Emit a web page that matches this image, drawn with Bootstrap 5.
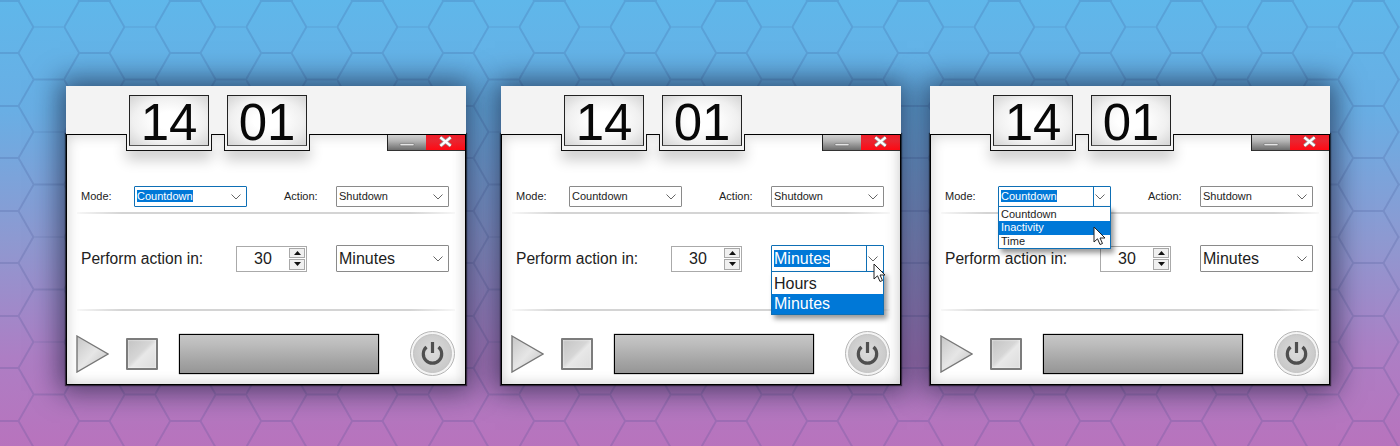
<!doctype html>
<html lang="en">
<head>
<meta charset="utf-8">
<title>Shutdown timer</title>
<link rel="stylesheet" href="https://cdn.jsdelivr.net/npm/bootstrap@5.3.0/dist/css/bootstrap.min.css">
<style>
html,body{height:446px;overflow:hidden}
body{margin:0;padding:86px 0 0 66px;font-family:"Liberation Sans",Arial,sans-serif;color:#1c1c1c;
 background-color:#8f98d0;
 background-image:url("data:image/svg+xml,%3Csvg xmlns='http://www.w3.org/2000/svg' width='91' height='52.5'%3E%3Cpath d='M0 26.25L15.17 0H45.5L60.67 26.25L45.5 52.5H15.17ZM60.67 26.25H91' fill='none' stroke='%23304080' stroke-opacity='.17' stroke-width='2'/%3E%3C/svg%3E"),linear-gradient(180deg,#5fb7ea 0%,#69aee4 25%,#8f98d0 55%,#ad7ec4 80%,#b873bd 100%);
 background-position:64px .75px,0 0;background-repeat:repeat,no-repeat}
.desk{gap:35px}
.desk>.win:last-child{margin-left:-6px}
.win{width:400px;height:299px;position:relative;box-shadow:0 0 26px 6px rgba(10,15,40,.6)}
.band{height:48px;background:#f3f3f3;padding:9px 0 0 60px;gap:12px;position:relative;z-index:2}
.tab{width:86px;height:56px;position:relative;padding:0 3px;flex:none}
.tab::after{content:"";position:absolute;left:0;right:0;top:39px;height:17px;border:1.500px solid #111;border-top:0;background:#f3f3f3;box-shadow:0 9px 14px rgba(0,0,0,.2);z-index:-1}
.digits{height:51px;border:1px solid #222;border-bottom:1px solid #555;font-size:51px;line-height:54px;text-align:center;color:#080808;
 background:radial-gradient(ellipse at center,#fff 25%,#f0f0f0 65%,#d4d4d4 100%)}
.pane{height:251px;background:#fff;border:solid #000;border-width:1px 1px 1px 1px;box-shadow:inset 0 0 14px rgba(0,0,0,.2),0 0 1px 1px rgba(0,0,0,.55)}
.chrome{height:16px}
.chrome svg{display:block}
.mini,.shut{width:39px;height:16px;border-bottom:1px solid #333;border-left:1px solid #222}
.mini{background:linear-gradient(180deg,#d0d0d0,#b4b4b4 40%,#6d6d6d)}
.shut{width:39px;background:linear-gradient(180deg,#f01c28,#e92530 40%,#ff0a14);border-left:0}
.lbl-s{font-size:11px;width:53px;color:#222}
.combo{position:relative;width:113px;background:#fff;border:1px solid #8a8a8a;border-radius:1px;flex:none}
.combo-s{height:21px;font-size:11px;line-height:19px;padding-left:2px}
.combo-l{height:27px;font-size:16px;line-height:25px;padding-left:2px}
.combo svg.chev{position:absolute;right:5px;top:50%;margin-top:-3px}
.hot{border-color:#0e6fb5}
.hot>span.txt{background:#0078d7;color:#fff}
.split::after{content:"";position:absolute;right:16px;top:0;bottom:0;width:1px;background:#0e6fb5}
.rule{height:2px;margin:5px 10px 0 10px;background:linear-gradient(90deg,#f7f7f7,#d4d4d4 12%,#d4d4d4 88%,#f7f7f7)}
.row-mode{margin:35px 0 0 14px}
.row-act{font-size:11px;width:52px;margin-left:37px;color:#222}
.row-perf{margin:31px 0 0 14px}
.lbl-l{width:155px;font-size:15.6px;color:#222}
.spin{width:71px;height:26px;border:1px solid #aaa;background:#fff;font-size:16px;line-height:24px;padding-left:17px;margin-right:29px;position:relative;flex:none}
.arrows{position:absolute;right:1px;top:1px;width:16px}
.arrows i{display:flex;align-items:center;justify-content:center;height:10.5px;background:#f0f0f0;border:1px solid #a8a8a8;margin-bottom:1px}
.rule2{margin-top:37px}
.foot{margin:20px 0 0 9px}
.stopper{width:32px;height:32px;border:2px solid #7c7c7c;border-radius:1px;margin:0 21px 0 17px;flex:none;background:linear-gradient(135deg,#c4c4c4,#d6d6d6 45%,#e8e8e8 55%,#dcdcdc);box-shadow:inset 0 0 2px #fff}
.meter{width:200px;height:40px;border:1px solid #000;box-shadow:0 0 1px rgba(0,0,0,.8);background:linear-gradient(180deg,#c6c6c6,#bcbcbc 25%,#a4a4a4 70%,#969696);flex:none}
.powr{margin-left:31px;flex:none}
.drop{position:absolute;left:-1px;top:100%;width:113px;background:#fff;border:1px solid #0e6fb5;z-index:5;box-shadow:3px 4px 5px rgba(0,0,0,.4)}
.drop-s{font-size:11px;line-height:13.3px;padding-top:1px}
.drop-l{font-size:16px;line-height:20px;padding-top:2px}
.drop div{padding-left:2px}
.drop .on{background:#0078d7;color:#fff}
.ptr{position:absolute;z-index:6}
</style>
</head>
<body>
<svg width="0" height="0" aria-hidden="true" style="position:absolute">
 <defs>
  <linearGradient id="pg" x1="0" y1="0" x2="1" y2="1"><stop offset="0" stop-color="#c6c6c6"/><stop offset=".5" stop-color="#e6e6e6"/><stop offset="1" stop-color="#bdbdbd"/></linearGradient>
  <radialGradient id="ball" cx=".5" cy=".45" r=".55"><stop offset="0" stop-color="#dcdcdc"/><stop offset="1" stop-color="#c8c8c8"/></radialGradient>
  <symbol id="chev" viewBox="0 0 10 6"><path d="M.5 .5L5 5L9.500 .5" fill="none" stroke="#666" stroke-width="1"/></symbol>
  <symbol id="play" viewBox="0 0 33 38"><path d="M1 1L32 19L1 37Z" fill="url(#pg)" stroke="#777" stroke-width="1.4"/></symbol>
  <symbol id="power" viewBox="0 0 45 45"><circle cx="22.500" cy="22.500" r="22" fill="#f4f4f4" stroke="#b4b4b4"/><circle cx="22.500" cy="22.500" r="19" fill="url(#ball)" stroke="#c4c4c4"/><path d="M16.500 16A9.200 9.200 0 1 0 28.500 16" fill="none" stroke="#4f4f4f" stroke-width="3.200"/><path d="M22.500 11V22" stroke="#4f4f4f" stroke-width="3.200"/></symbol>
  <symbol id="close" viewBox="0 0 39 16"><path d="M14 2.500L25 11.500M25 2.500L14 11.500" stroke="#999" stroke-width="4"/><path d="M14 2.500L25 11.500M25 2.500L14 11.500" stroke="#fff" stroke-width="2.400"/></symbol>
  <symbol id="dash" viewBox="0 0 39 16"><rect x="12" y="9" width="15" height="2.500" rx="1" fill="#e4e4e4" stroke="#666" stroke-width=".6"/></symbol>
  <symbol id="arrow" viewBox="0 0 14 20"><path d="M1 1V16L4.500 12.800L7 18.500L9.500 17.500L7 12H12Z" fill="#fff" stroke="#222" stroke-width="1"/></symbol>
  <symbol id="up" viewBox="0 0 7 4"><path d="M3.500 0L7 4H0Z" fill="#111"/></symbol>
  <symbol id="down" viewBox="0 0 7 4"><path d="M0 0H7L3.500 4Z" fill="#111"/></symbol>
 </defs>
</svg>

<main class="desk d-flex">
 <!-- window 1 -->
 <section class="win d-flex flex-column">
  <div class="band d-flex">
   <div class="tab"><div class="digits">14</div></div>
   <div class="tab"><div class="digits">01</div></div>
  </div>
  <div class="pane">
   <div class="chrome d-flex justify-content-end">
    <div class="mini"><svg width="38" height="15"><use href="#dash"/></svg></div>
    <div class="shut"><svg width="39" height="15"><use href="#close"/></svg></div>
   </div>
   <div class="row-mode d-flex align-items-center">
    <div class="lbl-s">Mode:</div>
    <div class="combo combo-s hot"><span class="txt">Countdown</span><svg class="chev" width="10" height="6"><use href="#chev"/></svg></div>
    <div class="row-act">Action:</div>
    <div class="combo combo-s">Shutdown<svg class="chev" width="10" height="6"><use href="#chev"/></svg></div>
   </div>
   <div class="rule"></div>
   <div class="row-perf d-flex align-items-center">
    <div class="lbl-l">Perform action in:</div>
    <div class="spin">30<div class="arrows"><i><svg width="7" height="4"><use href="#up"/></svg></i><i><svg width="7" height="4"><use href="#down"/></svg></i></div></div>
    <div class="combo combo-l">Minutes<svg class="chev" width="10" height="6"><use href="#chev"/></svg></div>
   </div>
   <div class="rule rule2"></div>
   <div class="foot d-flex align-items-center">
    <svg width="33" height="38"><use href="#play"/></svg>
    <div class="stopper"></div>
    <div class="meter"></div>
    <svg class="powr" width="45" height="45"><use href="#power"/></svg>
   </div>
  </div>
 </section>

 <!-- window 2 -->
 <section class="win d-flex flex-column">
  <div class="band d-flex">
   <div class="tab"><div class="digits">14</div></div>
   <div class="tab"><div class="digits">01</div></div>
  </div>
  <div class="pane">
   <div class="chrome d-flex justify-content-end">
    <div class="mini"><svg width="38" height="15"><use href="#dash"/></svg></div>
    <div class="shut"><svg width="39" height="15"><use href="#close"/></svg></div>
   </div>
   <div class="row-mode d-flex align-items-center">
    <div class="lbl-s">Mode:</div>
    <div class="combo combo-s">Countdown<svg class="chev" width="10" height="6"><use href="#chev"/></svg></div>
    <div class="row-act">Action:</div>
    <div class="combo combo-s">Shutdown<svg class="chev" width="10" height="6"><use href="#chev"/></svg></div>
   </div>
   <div class="rule"></div>
   <div class="row-perf d-flex align-items-center">
    <div class="lbl-l">Perform action in:</div>
    <div class="spin">30<div class="arrows"><i><svg width="7" height="4"><use href="#up"/></svg></i><i><svg width="7" height="4"><use href="#down"/></svg></i></div></div>
    <div class="combo combo-l hot split"><span class="txt">Minutes</span><svg class="chev" width="10" height="6"><use href="#chev"/></svg>
     <div class="drop drop-l"><div>Hours</div><div class="on">Minutes</div></div>
     <svg class="ptr" style="left:101px;top:17px" width="14" height="20"><use href="#arrow"/></svg>
    </div>
   </div>
   <div class="rule rule2"></div>
   <div class="foot d-flex align-items-center">
    <svg width="33" height="38"><use href="#play"/></svg>
    <div class="stopper"></div>
    <div class="meter"></div>
    <svg class="powr" width="45" height="45"><use href="#power"/></svg>
   </div>
  </div>
 </section>

 <!-- window 3 -->
 <section class="win d-flex flex-column">
  <div class="band d-flex">
   <div class="tab"><div class="digits">14</div></div>
   <div class="tab"><div class="digits">01</div></div>
  </div>
  <div class="pane">
   <div class="chrome d-flex justify-content-end">
    <div class="mini"><svg width="38" height="15"><use href="#dash"/></svg></div>
    <div class="shut"><svg width="39" height="15"><use href="#close"/></svg></div>
   </div>
   <div class="row-mode d-flex align-items-center">
    <div class="lbl-s">Mode:</div>
    <div class="combo combo-s hot split"><span class="txt">Countdown</span><svg class="chev" width="10" height="6"><use href="#chev"/></svg>
     <div class="drop drop-s"><div>Countdown</div><div class="on">Inactivity</div><div>Time</div></div>
     <svg class="ptr" style="left:94px;top:39px" width="14" height="20"><use href="#arrow"/></svg>
    </div>
    <div class="row-act">Action:</div>
    <div class="combo combo-s">Shutdown<svg class="chev" width="10" height="6"><use href="#chev"/></svg></div>
   </div>
   <div class="rule"></div>
   <div class="row-perf d-flex align-items-center">
    <div class="lbl-l">Perform action in:</div>
    <div class="spin">30<div class="arrows"><i><svg width="7" height="4"><use href="#up"/></svg></i><i><svg width="7" height="4"><use href="#down"/></svg></i></div></div>
    <div class="combo combo-l">Minutes<svg class="chev" width="10" height="6"><use href="#chev"/></svg></div>
   </div>
   <div class="rule rule2"></div>
   <div class="foot d-flex align-items-center">
    <svg width="33" height="38"><use href="#play"/></svg>
    <div class="stopper"></div>
    <div class="meter"></div>
    <svg class="powr" width="45" height="45"><use href="#power"/></svg>
   </div>
  </div>
 </section>
</main>
<script src="https://cdn.jsdelivr.net/npm/bootstrap@5.3.0/dist/js/bootstrap.bundle.min.js"></script>
</body>
</html>
